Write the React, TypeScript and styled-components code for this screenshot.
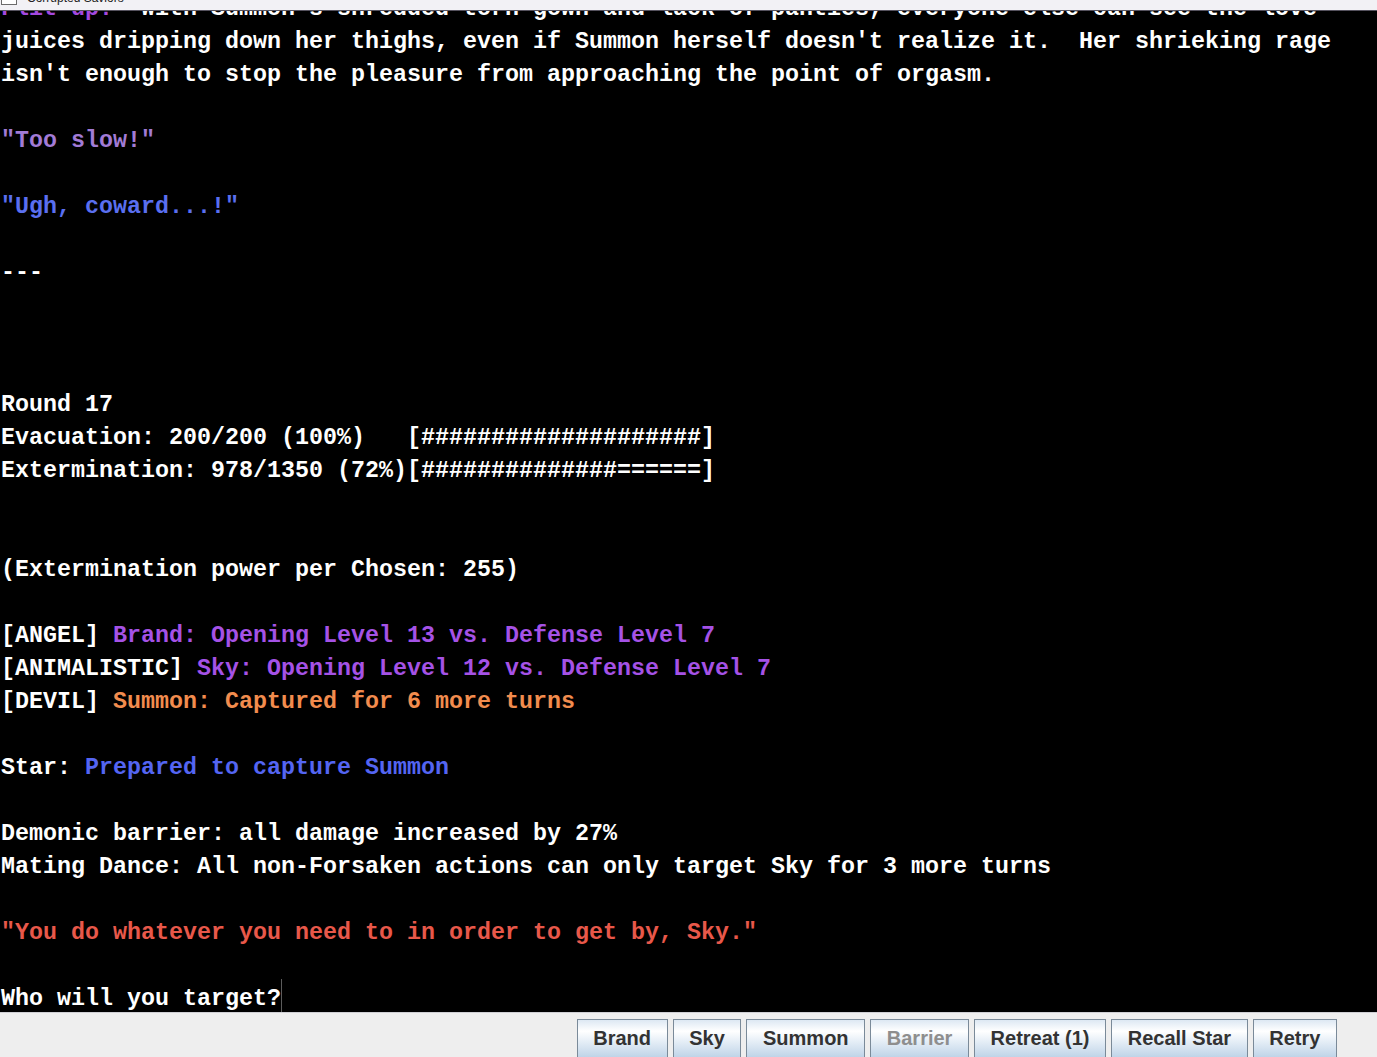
import styled, { createGlobalStyle } from 'styled-components';

const GlobalStyle = createGlobalStyle`
  * { box-sizing: border-box; }
  html, body { margin: 0; padding: 0; height: 100%; background: #eeeeee; }
  #root { height: 100%; }
`;

const Frame = styled.div`
  display: flex;
  flex-direction: column;
  height: 100vh;
  overflow: hidden;
`;

const TitleStrip = styled.div`
  flex: none;
  height: 11px;
  display: flex;
  align-items: flex-end;
  gap: 9px;
  padding-left: 1px;
  background: #f2f1f5;
  border-bottom: 1px solid #55525e;
  overflow: hidden;
`;

const TitleText = styled.span`
  font-family: 'Liberation Sans', Arial, sans-serif;
  font-size: 12px;
  line-height: 14px;
  margin-bottom: 5px;
  color: #222;
  white-space: nowrap;
`;

const Console = styled.div`
  flex: 1;
  min-height: 0;
  background: #000;
  overflow: hidden;
  display: flex;
  flex-direction: column;
  justify-content: flex-end;
  padding-left: 1px;
  font-family: 'Liberation Mono', 'Courier New', monospace;
  font-weight: bold;
  font-size: 23.33px;
  color: #ffffff;
`;

// the console rows keep a 33px pitch; the taller line box drops the baseline to where Swing draws it
const Line = styled.div`
  flex: none;
  height: 33px;
  line-height: 41px;
  white-space: pre;
`;

const Seg = styled.span<{ $color?: string }>`
  color: ${({ $color }) => $color || '#ffffff'};
`;

const Caret = styled.span`
  display: inline-block;
  width: 1px;
  height: 33px;
  vertical-align: top;
  background: #5c5c5c;
`;

const ButtonBar = styled.div`
  flex: none;
  height: 45px;
  display: flex;
  justify-content: flex-end;
  align-items: flex-start;
  gap: 5px;
  padding: 6px 40px 0 0;
  background: #eeeeee;
  border-top: 1px solid #cfcfd4;
  overflow: hidden;
`;

const ActionButton = styled.button<{ $disabled?: boolean }>`
  flex: none;
  height: 42px;
  padding: 0 15.6px 4px;
  margin: 0;
  border: 1px solid #7a8a99;
  border-radius: 0;
  background: linear-gradient(to bottom, #dde8f3 0%, #ffffff 28%, #e4edf6 55%, #b8cfe5 100%);
  font-family: 'Liberation Sans', Arial, sans-serif;
  font-weight: bold;
  font-size: 20px;
  line-height: 24px;
  color: ${({ $disabled }) => ($disabled ? '#8e8e8e' : '#333333')};
  cursor: ${({ $disabled }) => ($disabled ? 'default' : 'pointer')};
`;

const FLIT = '#a448df';
const LILAC = '#a27bd6';
const BLUE = '#5a6ff0';
const PURPLE = '#a552e6';
const ORANGE = '#f28c4e';
const STAR = '#5465f2';
const RED = '#e8584a';

type Segment = [string, string?];

const log: Segment[][] = [
  [['Flit up!', FLIT], ["  With Summon's shredded torn gown and lack of panties, everyone else can see the love"]],
  [["juices dripping down her thighs, even if Summon herself doesn't realize it.  Her shrieking rage"]],
  [["isn't enough to stop the pleasure from approaching the point of orgasm."]],
  [],
  [['"Too slow!"', LILAC]],
  [],
  [['"Ugh, coward...!"', BLUE]],
  [],
  [['---']],
  [],
  [],
  [],
  [['Round 17']],
  [['Evacuation: 200/200 (100%)   [####################]']],
  [['Extermination: 978/1350 (72%)[##############======]']],
  [],
  [],
  [['(Extermination power per Chosen: 255)']],
  [],
  [['[ANGEL] '], ['Brand: Opening Level 13 vs. Defense Level 7', PURPLE]],
  [['[ANIMALISTIC] '], ['Sky: Opening Level 12 vs. Defense Level 7', PURPLE]],
  [['[DEVIL] '], ['Summon: Captured for 6 more turns', ORANGE]],
  [],
  [['Star: '], ['Prepared to capture Summon', STAR]],
  [],
  [['Demonic barrier: all damage increased by 27%']],
  [['Mating Dance: All non-Forsaken actions can only target Sky for 3 more turns']],
  [],
  [['"You do whatever you need to in order to get by, Sky."', RED]],
  [],
];

const actions = [
  { label: 'Brand' },
  { label: 'Sky' },
  { label: 'Summon' },
  { label: 'Barrier', disabled: true },
  { label: 'Retreat (1)' },
  { label: 'Recall Star' },
  { label: 'Retry' },
];

const WindowIcon = () => (
  <svg width='17' height='16' viewBox='0 0 17 16' style={{ flex: 'none', marginBottom: 5 }}>
    <rect x='0.5' y='2.5' width='15' height='13' fill='#ffffff' stroke='#6b6b6b' />
    <line x1='0.5' y1='6.5' x2='15.5' y2='6.5' stroke='#6b6b6b' />
  </svg>
);

const App = () => {
  return (
    <Frame>
      <GlobalStyle />
      <TitleStrip>
        <WindowIcon />
        <TitleText>Corrupted Saviors</TitleText>
      </TitleStrip>
      <Console>
        {log.map((segments, i) => (
          <Line key={i}>
            {segments.map(([text, color], j) => (
              <Seg key={j} $color={color}>
                {text}
              </Seg>
            ))}
          </Line>
        ))}
        <Line>
          Who will you target?<Caret />
        </Line>
      </Console>
      <ButtonBar>
        {actions.map((a) => (
          <ActionButton key={a.label} $disabled={a.disabled}>
            {a.label}
          </ActionButton>
        ))}
      </ButtonBar>
    </Frame>
  );
};

export default App;
